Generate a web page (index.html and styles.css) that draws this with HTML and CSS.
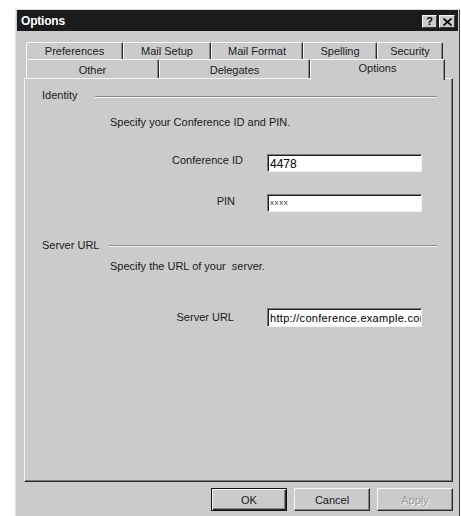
FILE: index.html
```html
<!DOCTYPE html>
<html>
<head>
<meta charset="utf-8">
<title>Options</title>
<link rel="stylesheet" href="styles.css">
</head>
<body>
<div class="window">
  <div class="titlebar">
    <span class="title">Options</span>
    <div class="caption-btns">
      <span class="cbtn cbtn-help">?</span>
      <span class="cbtn cbtn-close">
        <svg width="9" height="8" viewBox="0 0 9 8"><path d="M0.5 0.5 L8.5 7.5 M8.5 0.5 L0.5 7.5" stroke="#000" stroke-width="1.6" fill="none"/></svg>
      </span>
    </div>
  </div>
  <div class="client">
    <div class="tabs">
      <div class="tabrow row-back">
        <div class="tab t-pref">Preferences</div>
        <div class="tab t-mail">Mail Setup</div>
        <div class="tab t-format">Mail Format</div>
        <div class="tab t-spell">Spelling</div>
        <div class="tab t-sec">Security</div>
      </div>
      <div class="tabrow row-front">
        <div class="tab t-other">Other</div>
        <div class="tab t-deleg">Delegates</div>
        <div class="tab t-opts selected">Options</div>
      </div>
    </div>
    <div class="panel">
      <div class="group-head gh-identity">
        <span class="group-label">Identity</span>
        <span class="group-line gl-identity"></span>
      </div>
      <p class="desc desc-identity">Specify your Conference ID and PIN.</p>
      <div class="field-row row-cid">
        <span class="field-label lbl-cid">Conference ID</span>
        <div class="field field-big">4478</div>
      </div>
      <div class="field-row row-pin">
        <span class="field-label lbl-pin">PIN</span>
        <div class="field field-pin">xxxx</div>
      </div>
      <div class="group-head gh-server">
        <span class="group-label">Server URL</span>
        <span class="group-line gl-server"></span>
      </div>
      <p class="desc desc-server">Specify the URL of your&nbsp; server.</p>
      <div class="field-row row-url">
        <span class="field-label lbl-url">Server URL</span>
        <div class="field field-url">http://conference.example.com</div>
      </div>
    </div>
    <div class="footer">
      <button class="btn btn-default">OK</button>
      <button class="btn">Cancel</button>
      <button class="btn btn-disabled">Apply</button>
    </div>
  </div>
</div>
</body>
</html>
```

FILE: styles.css
```css
html, body {
  margin: 0;
  padding: 0;
  background: #ffffff;
  overflow: hidden;
}

body {
  width: 461px;
  height: 516px;
  padding: 9px 0 0 15px;
  box-sizing: border-box;
  font-family: "Liberation Sans", Arial, sans-serif;
  font-size: 11px;
  color: #1a1a1a;
}

/* dialog frame */
.window {
  width: 445px;
  height: 520px;
  box-sizing: border-box;
  background: #cbcbcb;
  border-top: 1px solid #dcdcdc;
  border-left: 1px solid #e4e4e4;
  border-right: 1px solid #3a3a3a;
  padding: 0 1px;
}

.titlebar {
  height: 21px;
  background: #1b1b1b;
  display: flex;
  align-items: center;
  justify-content: space-between;
  padding: 0 3px 0 4px;
}

.title {
  color: #ffffff;
  font-weight: bold;
  font-size: 12px;
  letter-spacing: -0.2px;
}

.caption-btns {
  display: flex;
  gap: 2px;
  margin-top: 2px;
}

.cbtn {
  width: 13px;
  height: 11px;
  background: #cbcbcb;
  border-top: 1px solid #f4f4f4;
  border-left: 1px solid #f4f4f4;
  border-right: 1px solid #3a3a3a;
  border-bottom: 1px solid #3a3a3a;
  display: flex;
  align-items: center;
  justify-content: center;
  font-weight: bold;
  font-size: 11px;
  line-height: 11px;
  color: #000;
}

.cbtn-close {
  width: 14px;
}

/* page area */
.client {
  padding: 11px 5px 0 7px;
}

.tabs {
  position: relative;
  z-index: 1;
}

.tabrow {
  display: flex;
  margin-left: 2px;
}

.tab {
  box-sizing: border-box;
  border-top: 1px solid #f6f6f6;
  border-left: 1px solid #f6f6f6;
  border-right: 1px solid #2a2a2a;
  box-shadow: inset -1px 0 #8a8a8a;
  border-radius: 2px 2px 0 0;
  text-align: center;
  white-space: nowrap;
}

.row-back .tab {
  height: 17px;
  line-height: 16px;
}

.row-front .tab {
  height: 19px;
  line-height: 20px;
}

.t-pref   { width: 97px; }
.t-mail   { width: 88px; }
.t-format { width: 92px; }
.t-spell  { width: 74px; }
.t-sec    { width: 66px; }

.t-other  { width: 133px; }
.t-deleg  { width: 151px; }
.t-opts   { width: 135px; }

.tab.selected {
  height: 21px;
  line-height: 17px;
  margin-bottom: -2px;
  background: #cbcbcb;
}

.panel {
  height: 404px;
  box-sizing: border-box;
  border-top: 1px solid #f6f6f6;
  border-left: 1px solid #f6f6f6;
  border-right: 1px solid #2a2a2a;
  border-bottom: 1px solid #2a2a2a;
  box-shadow: inset -1px -1px #7c7c7c;
  padding: 10px 15px 0 17px;
}

.group-head {
  display: flex;
  align-items: center;
  height: 13px;
  line-height: 13px;
}

.group-line {
  flex: 1;
  height: 1px;
  background: #8c8c8c;
  border-bottom: 1px solid #f4f4f4;
}

.gl-identity { margin-left: 18px; margin-top: 3px; }
.gl-server   { margin-left: 10px; margin-top: 0; }

.desc {
  margin: 0;
  line-height: 13px;
  padding-left: 68px;
}

.desc-identity { margin-top: 14px; }
.desc-server   { margin-top: 8px; }

.gh-server { margin-top: 27px; }

.field-row {
  display: flex;
  align-items: flex-start;
  justify-content: flex-end;
  padding-right: 15px;
}

.row-cid { margin-top: 25px; }
.row-pin { margin-top: 22px; }
.row-url { margin-top: 35px; }

.field-label {
  line-height: 13px;
}

.lbl-cid { margin-right: 24px; }
.lbl-pin { margin-right: 32px; margin-top: 1px; }
.lbl-url { margin-right: 33px; margin-top: 3px; }

.field {
  width: 155px;
  height: 18px;
  box-sizing: border-box;
  background: #ffffff;
  border-top: 1px solid #7a7a7a;
  border-left: 1px solid #7a7a7a;
  border-right: 1px solid #f2f2f2;
  border-bottom: 1px solid #f2f2f2;
  box-shadow: inset 1px 1px #1e1e1e;
  padding: 1px 0 0 2px;
  font-size: 11px;
  line-height: 15px;
  white-space: nowrap;
  overflow: hidden;
  color: #000;
}

.field-url {
  height: 19px;
  line-height: 16px;
  letter-spacing: 0.3px;
}

.field-big {
  font-size: 12px;
  line-height: 17px;
}

.field-pin {
  font-size: 8px;
  line-height: 13px;
  color: #333;
  letter-spacing: 0.6px;
}

/* dialog buttons */
.footer {
  display: flex;
  justify-content: flex-end;
  gap: 7px;
  padding-top: 6px;
}

.btn {
  width: 76px;
  height: 23px;
  box-sizing: border-box;
  margin: 0;
  padding: 0;
  background: #cbcbcb;
  border-top: 1px solid #f6f6f6;
  border-left: 1px solid #f6f6f6;
  border-right: 1px solid #2a2a2a;
  border-bottom: 1px solid #2a2a2a;
  box-shadow: inset -1px -1px #858585;
  font-family: "Liberation Sans", Arial, sans-serif;
  font-size: 11px;
  color: #1a1a1a;
}

.btn-default {
  border: 1px solid #111;
  box-shadow: inset 1px 1px #f6f6f6, inset -1px -1px #2a2a2a, inset -2px -2px #858585;
}

.btn-disabled {
  color: #9a9a9a;
  text-shadow: 1px 1px #f4f4f4;
}
```
